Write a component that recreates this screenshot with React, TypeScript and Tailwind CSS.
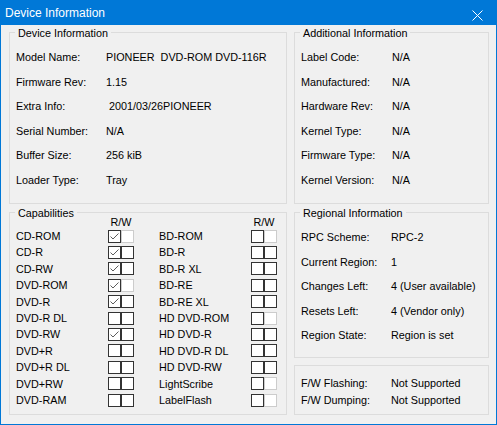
import React from 'react';

type BoxState = 'c' | 'e' | 'd';

const deviceRows: [string, string][] = [
  ['Model Name:', 'PIONEER  DVD-ROM DVD-116R'],
  ['Firmware Rev:', '1.15'],
  ['Extra Info:', ' 2001/03/26PIONEER'],
  ['Serial Number:', 'N/A'],
  ['Buffer Size:', '256 kiB'],
  ['Loader Type:', 'Tray'],
];

const additionalRows: [string, string][] = [
  ['Label Code:', 'N/A'],
  ['Manufactured:', 'N/A'],
  ['Hardware Rev:', 'N/A'],
  ['Kernel Type:', 'N/A'],
  ['Firmware Type:', 'N/A'],
  ['Kernel Version:', 'N/A'],
];

const regionalRows: [string, string][] = [
  ['RPC Scheme:', 'RPC-2'],
  ['Current Region:', '1'],
  ['Changes Left:', '4 (User available)'],
  ['Resets Left:', '4 (Vendor only)'],
  ['Region State:', 'Region is set'],
];

const capsLeft: [string, BoxState, BoxState][] = [
  ['CD-ROM', 'c', 'd'],
  ['CD-R', 'c', 'e'],
  ['CD-RW', 'c', 'e'],
  ['DVD-ROM', 'c', 'd'],
  ['DVD-R', 'c', 'e'],
  ['DVD-R DL', 'e', 'e'],
  ['DVD-RW', 'c', 'e'],
  ['DVD+R', 'e', 'e'],
  ['DVD+R DL', 'e', 'e'],
  ['DVD+RW', 'e', 'e'],
  ['DVD-RAM', 'e', 'e'],
];

const capsRight: [string, BoxState, BoxState][] = [
  ['BD-ROM', 'e', 'd'],
  ['BD-R', 'e', 'e'],
  ['BD-R XL', 'e', 'e'],
  ['BD-RE', 'e', 'e'],
  ['BD-RE XL', 'e', 'e'],
  ['HD DVD-ROM', 'e', 'd'],
  ['HD DVD-R', 'e', 'e'],
  ['HD DVD-R DL', 'e', 'e'],
  ['HD DVD-RW', 'e', 'e'],
  ['LightScribe', 'e', 'd'],
  ['LabelFlash', 'e', 'd'],
];

function Group({ title, className, children }: { title: string; className: string; children: React.ReactNode }) {
  return (
    <fieldset className={`border border-[#dcdcdc] ${className}`}>
      <legend className="ml-[5px] px-[3px] pt-[2px] leading-[12px]">{title}</legend>
      {children}
    </fieldset>
  );
}

function InfoRows({ rows, labelWidth }: { rows: [string, string][]; labelWidth: string }) {
  return (
    <div className="pt-[6px] pl-[6px]">
      {rows.map(([label, value]) => (
        <div key={label} className="flex h-[24.5px] items-center leading-[24.5px]">
          <span className={labelWidth}>{label}</span>
          <span className="whitespace-pre">{value}</span>
        </div>
      ))}
    </div>
  );
}

function Box({ state }: { state: BoxState }) {
  const border = state === 'd' ? 'border-[#cccccc]' : 'border-[#333333]';
  return (
    <div className={`w-[13px] h-[13px] border bg-white ${border}`}>
      {state === 'c' && (
        <svg width="11" height="11" viewBox="0 0 11 11">
          <path d="M1.5 5.5 L4 8 L9.5 2.5" fill="none" stroke="#5c5c5c" strokeWidth="1" />
        </svg>
      )}
    </div>
  );
}

function CapColumn({ items }: { items: [string, BoxState, BoxState][] }) {
  return (
    <div className="flex flex-col">
      <div className="flex h-[11px] -mt-[2px] leading-[11px]">
        <span className="w-[92px]" />
        <span className="w-[26px] text-center">R/W</span>
      </div>
      {items.map(([label, r, w]) => (
        <div key={label} className="flex h-[16.4px] items-center leading-[16.4px]">
          <span className="w-[92px]">{label}</span>
          <div className="flex">
            <Box state={r} />
            <Box state={w} />
          </div>
        </div>
      ))}
    </div>
  );
}

export default function App() {
  return (
    <div className="w-[497px] h-[425px] flex flex-col border border-[#0078d7] bg-[#f0f0f0] text-[10.8px] text-black font-['Liberation_Sans',Arial,sans-serif]">
      <div className="h-[24px] shrink-0 flex items-center justify-between bg-[#0078d7] pl-[4px] pr-[8px] text-[12px] leading-[24px] text-white">
        <span>Device Information</span>
        <svg width="11" height="11" viewBox="0 0 11 11" className="mt-[4px] mr-[5px]">
          <path d="M0.5 0.5 L10.5 10.5 M10.5 0.5 L0.5 10.5" stroke="white" strokeWidth="1" />
        </svg>
      </div>

      <div className="flex gap-[7px] pl-[8px]">
        <div className="w-[278px] flex flex-col">
          <Group title="Device Information" className="h-[179px]">
            <InfoRows rows={deviceRows} labelWidth="w-[90px]" />
          </Group>
          <Group title="Capabilities" className="h-[210px] mt-[1px]">
            <div className="flex gap-[25px] pl-[6px]">
              <CapColumn items={capsLeft} />
              <CapColumn items={capsRight} />
            </div>
          </Group>
        </div>

        <div className="w-[195px] flex flex-col">
          <Group title="Additional Information" className="h-[179px]">
            <InfoRows rows={additionalRows} labelWidth="w-[91px]" />
          </Group>
          <Group title="Regional Information" className="h-[153px] mt-[1px]">
            <InfoRows rows={regionalRows} labelWidth="w-[90px]" />
          </Group>
          <div className="h-[50px] mt-[7px] border border-[#dcdcdc] pt-[9px] pl-[6px]">
            <div className="flex h-[17px] items-center leading-[17px]">
              <span className="w-[90px]">F/W Flashing:</span>
              <span>Not Supported</span>
            </div>
            <div className="flex h-[17px] items-center leading-[17px]">
              <span className="w-[90px]">F/W Dumping:</span>
              <span>Not Supported</span>
            </div>
          </div>
        </div>
      </div>
    </div>
  );
}
